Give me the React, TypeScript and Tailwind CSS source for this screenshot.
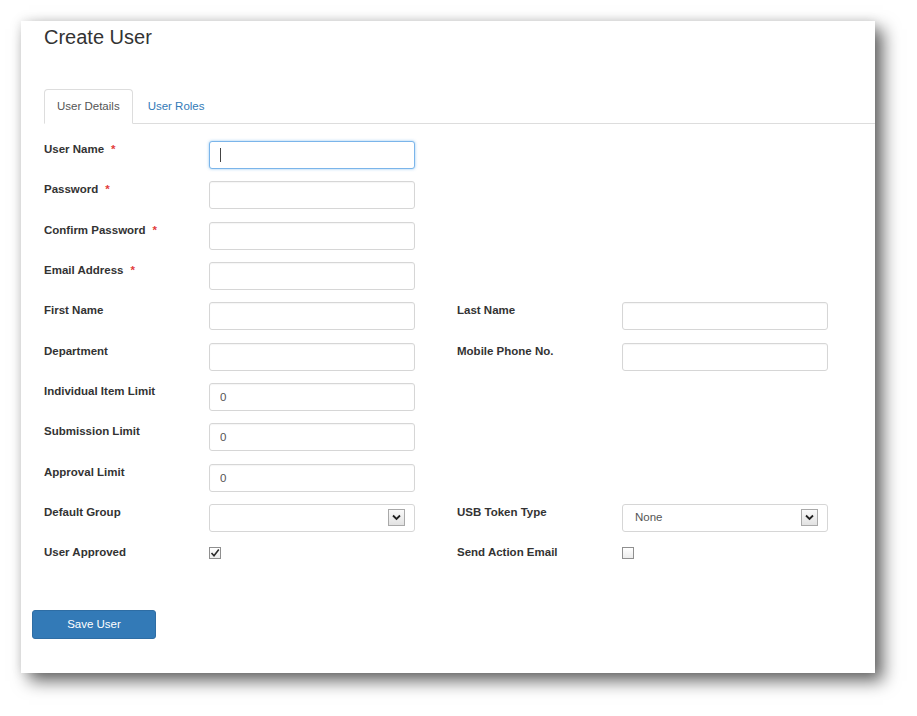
import React from 'react'

type Field =
  | { kind: 'text'; label: string; required?: boolean; value?: string; focused?: boolean }
  | { kind: 'select'; label: string; value: string }
  | { kind: 'check'; label: string; checked: boolean }

const rows: [Field, Field | null][] = [
  [{ kind: 'text', label: 'User Name', required: true, focused: true }, null],
  [{ kind: 'text', label: 'Password', required: true }, null],
  [{ kind: 'text', label: 'Confirm Password', required: true }, null],
  [{ kind: 'text', label: 'Email Address', required: true }, null],
  [{ kind: 'text', label: 'First Name' }, { kind: 'text', label: 'Last Name' }],
  [{ kind: 'text', label: 'Department' }, { kind: 'text', label: 'Mobile Phone No.' }],
  [{ kind: 'text', label: 'Individual Item Limit', value: '0' }, null],
  [{ kind: 'text', label: 'Submission Limit', value: '0' }, null],
  [{ kind: 'text', label: 'Approval Limit', value: '0' }, null],
  [{ kind: 'select', label: 'Default Group', value: '' }, { kind: 'select', label: 'USB Token Type', value: 'None' }],
  [{ kind: 'check', label: 'User Approved', checked: true }, { kind: 'check', label: 'Send Action Email', checked: false }],
]

function Control({ f }: { f: Field }) {
  if (f.kind === 'check') {
    return (
      <div className="mt-[3px] w-[12px] h-[12px] border border-[#8f8f8f] bg-gradient-to-b from-white to-[#ececec] flex items-center justify-center">
        {f.checked && (
          <svg width="10" height="10" viewBox="0 0 10 10">
            <path d="M1.5 5 L4 7.8 L8.8 1.5" fill="none" stroke="#2b2b2b" strokeWidth="1.6" />
          </svg>
        )}
      </div>
    )
  }
  if (f.kind === 'select') {
    return (
      <div className="w-[206px] h-[28px] border border-[#d6d6d6] rounded-[3px] bg-white flex items-center justify-between pl-[12px] pr-[9px] text-[11.5px] text-[#555]">
        <span>{f.value}</span>
        <div className="w-[17px] h-[17px] border border-[#a9a9a9] bg-gradient-to-b from-[#fafafa] to-[#e2e2e2] flex items-center justify-center">
          <svg width="11" height="11" viewBox="0 0 11 11">
            <path d="M2 3.5 L5.5 7 L9 3.5" fill="none" stroke="#222" strokeWidth="1.8" />
          </svg>
        </div>
      </div>
    )
  }
  return (
    <div className="relative">
      <input
        readOnly
        value={f.value ?? ''}
        className={
          'w-[206px] h-[28px] rounded-[3px] px-[10px] text-[11.5px] text-[#555] bg-white outline-none border ' +
          (f.focused
            ? 'border-[#7bb5ea] shadow-[0_0_3px_rgba(102,175,233,0.7)]'
            : 'border-[#d6d6d6] shadow-[inset_0_1px_1px_rgba(0,0,0,0.04)]')
        }
      />
      {f.focused && <span className="absolute left-[11px] top-[7px] w-px h-[14px] bg-[#444]" />}
    </div>
  )
}

function Cell({ f }: { f: Field }) {
  return (
    <div className="flex w-[371px]">
      <div className="w-[165px] text-[11.5px] leading-[14px] pt-px font-bold text-[#333]">
        {f.label}
        {f.kind === 'text' && f.required && <span className="text-[#e23b3b] ml-[7px]">*</span>}
      </div>
      <Control f={f} />
    </div>
  )
}

export default function App() {
  return (
    <div className="min-h-screen bg-white pt-[21px] pl-[21px]" style={{ fontFamily: '"Liberation Sans", Arial, sans-serif' }}>
      <div className="w-[854px] h-[652px] bg-white shadow-[8px_8px_16px_rgba(0,0,0,0.6),0_0_10px_rgba(0,0,0,0.1)]">
        <h1 className="pl-[23px] pt-[5px] text-[20px] leading-[22px] text-[#333]">Create User</h1>

        <ul className="ml-[23px] mt-[41px] flex border-b border-[#ddd] text-[11.5px]">
          <li className="-mb-px mr-[2px]">
            <span className="block h-[35px] leading-[33px] px-[12px] border border-[#ddd] border-b-transparent rounded-t-[4px] bg-white text-[#555]">
              User Details
            </span>
          </li>
          <li className="-mb-px">
            <span className="block h-[35px] leading-[33px] px-[12px] border border-transparent text-[#337ab7]">User Roles</span>
          </li>
        </ul>

        <div className="pl-[23px] mt-[17px] flex flex-col gap-[12.33px]">
          {rows.map(([a, b], i) => (
            <div key={i} className="flex gap-[42px] h-[28px]">
              <Cell f={a} />
              {b && <Cell f={b} />}
            </div>
          ))}
        </div>

        <div className="pl-[11px] mt-[38px]">
          <button className="w-[124px] h-[29px] rounded-[3px] bg-[#337ab7] border border-[#2e6da4] text-white text-[11.5px]">
            Save User
          </button>
        </div>
      </div>
    </div>
  )
}
